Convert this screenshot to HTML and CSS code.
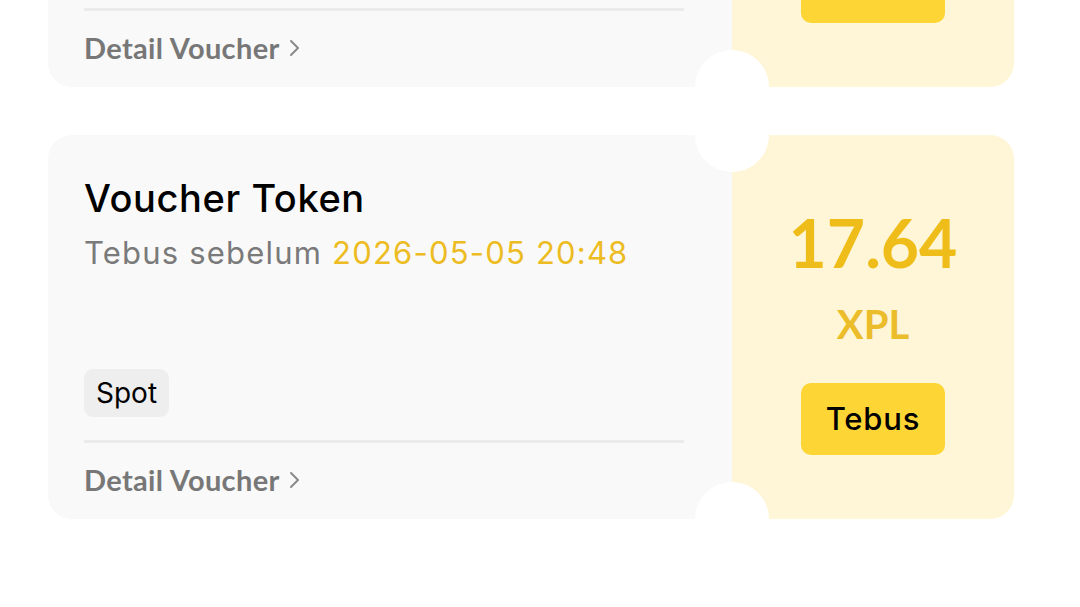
FILE: index.html
```html
<!DOCTYPE html>
<html lang="id">
<head>
<meta charset="utf-8">
<title>Voucher</title>
<link rel="stylesheet" href="styles.css">
</head>
<body>
<div class="list">
  <div class="card">
    <div class="left">
      <div class="title">Voucher Token</div>
      <div class="sub">Tebus sebelum <span class="date">2026-05-05 20:48</span></div>
      <div class="tag">Spot</div>
      <div class="divider"></div>
      <div class="footer">Detail Voucher
        <svg class="chev" width="12" height="18" viewBox="0 0 12 18"><polyline points="2,2 9,9 2,16" fill="none" stroke="#8a8a8a" stroke-width="2" stroke-linecap="round" stroke-linejoin="round"/></svg>
      </div>
    </div>
    <div class="right">
      <div class="amount">17.64</div>
      <div class="unit">XPL</div>
      <div class="btn">Tebus</div>
    </div>
  </div>
  <div class="card">
    <div class="left">
      <div class="title">Voucher Token</div>
      <div class="sub">Tebus sebelum <span class="date">2026-05-05 20:48</span></div>
      <div class="tag">Spot</div>
      <div class="divider"></div>
      <div class="footer">Detail Voucher
        <svg class="chev" width="12" height="18" viewBox="0 0 12 18"><polyline points="2,2 9,9 2,16" fill="none" stroke="#8a8a8a" stroke-width="2" stroke-linecap="round" stroke-linejoin="round"/></svg>
      </div>
    </div>
    <div class="right">
      <div class="amount">17.64</div>
      <div class="unit">XPL</div>
      <div class="btn">Tebus</div>
    </div>
  </div>
</div>
</body>
</html>
```
FILE: styles.css
```css
html, body {
  margin: 0;
  padding: 0;
  background: #ffffff;
  overflow: hidden;
}
body {
  width: 1080px;
  height: 607px;
  font-family: Lato, "Open Sans", sans-serif;
}
.list {
  display: flex;
  flex-direction: column;
  gap: 48px;
  padding: 0 66px 0 48px;
  margin-top: -297px;
}
.card {
  position: relative;
  display: flex;
  height: 384px;
  border-radius: 24px;
  overflow: hidden;
}
.card::before,
.card::after {
  content: "";
  position: absolute;
  left: 647px;
  width: 74px;
  height: 74px;
  border-radius: 50%;
  background: #ffffff;
}
.card::before { top: -37px; }
.card::after { bottom: -37px; }
.left {
  flex: 0 0 684px;
  box-sizing: border-box;
  background: #f9f9f9;
  padding: 40px 48px 0 36px;
  display: flex;
  flex-direction: column;
  align-items: flex-start;
}
.title {
  font-family: Inter, sans-serif;
  font-size: 38px;
  line-height: 46px;
  font-weight: 500;
  letter-spacing: 0.6px;
  color: #000;
}
.sub {
  font-family: Inter, sans-serif;
  margin-top: 12px;
  font-size: 31px;
  line-height: 40px;
  letter-spacing: 1.2px;
  color: #7a7a7a;
}
.date {
  color: #ecbc22;
}
.tag {
  font-family: Inter, sans-serif;
  margin-top: 96px;
  height: 48px;
  padding: 0 12px;
  border-radius: 9px;
  background: #eeeeee;
  font-size: 28px;
  line-height: 48px;
  color: #000;
}
.divider {
  margin-top: 23px;
  align-self: stretch;
  height: 3px;
  background: #ebebeb;
}
.footer {
  margin-top: 17px;
  font-size: 29px;
  line-height: 40px;
  font-weight: 700;
  letter-spacing: 0.35px;
  color: #777777;
  display: flex;
  align-items: center;
  gap: 9px;
}
.chev {
  display: block;
}
.right {
  flex: 1;
  background: #fff5d7;
  display: flex;
  flex-direction: column;
  align-items: center;
  padding-top: 68px;
}
.amount {
  font-size: 66px;
  line-height: 80px;
  font-weight: 700;
  color: #efbd19;
}
.unit {
  margin-top: 17px;
  font-size: 40px;
  line-height: 48px;
  font-weight: 700;
  color: #ecbd2a;
}
.btn {
  font-family: Inter, sans-serif;
  margin-top: 35px;
  width: 144px;
  height: 72px;
  border-radius: 10px;
  background: #fdd535;
  font-size: 31px;
  font-weight: 500;
  letter-spacing: 0.8px;
  line-height: 72px;
  text-align: center;
  color: #000;
}
```
